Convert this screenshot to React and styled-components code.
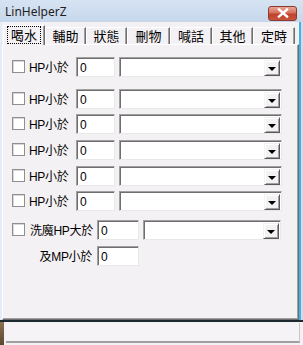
import React from "react";
import styled, { createGlobalStyle } from "styled-components";

const Global = createGlobalStyle`
  html, body {
    margin: 0;
    padding: 0;
    background: #6b5a45;
  }
  #root {
    width: 303px;
    height: 345px;
    overflow: hidden;
  }
`;

const FONT = `"Liberation Sans", "Noto Sans CJK TC", sans-serif`;

const Window = styled.div`
  width: 303px;
  height: 345px;
  display: flex;
  flex-direction: column;
  background: #cddcee;
  font-family: ${FONT};
  color: #000;
`;

const TitleBar = styled.div`
  height: 22px;
  display: flex;
  align-items: center;
  justify-content: space-between;
  padding: 0 6px 0 5px;
  background: linear-gradient(#d6e3f2, #c6d7ec);
  box-sizing: border-box;
`;

const TitleText = styled.div`
  font-family: "Noto Sans", "Liberation Sans", sans-serif;
  font-size: 12px;
  line-height: 14px;
  margin-top: 1px;
  color: #1e1e1e;
`;

const CloseButton = styled.div`
  width: 29px;
  height: 15px;
  margin-top: 4px;
  box-sizing: border-box;
  border: 1px solid #8a3a2e;
  border-radius: 3px;
  background: linear-gradient(#e8a896 0%, #d4705c 45%, #c0402c 55%, #c8553e 100%);
  display: flex;
  align-items: center;
  justify-content: center;
`;

const Client = styled.div`
  flex: 1;
  display: flex;
  flex-direction: column;
  margin: 0 2px 0 2px;
  background: #f4f1f4;
  border-right: 2px solid #3cb4e4;
  box-shadow: -2px 0 0 #e4edf7;
`;

const TabStrip = styled.div`
  height: 22px;
  display: flex;
  align-items: flex-end;
  padding-left: 1px;
`;

const Tab = styled.div`
  box-sizing: border-box;
  width: ${(p) => p.$w}px;
  height: ${(p) => (p.$active ? 20 : 17)}px;
  margin-bottom: ${(p) => (p.$active ? -1 : 0)}px;
  position: relative;
  z-index: ${(p) => (p.$active ? 2 : 1)};
  background: #f4f1f4;
  border-top: 1px solid #fff;
  border-left: 1px solid #fff;
  border-right: 1px solid #6e6e6e;
  box-shadow: inset -1px 0 0 #a0a0a0;
  font-family: "Noto Sans CJK TC", sans-serif;
  font-size: 13px;
  line-height: 16px;
  display: flex;
  align-items: center;
  justify-content: center;
  padding-bottom: ${(p) => (p.$active ? 2 : 0)}px;
`;

const TabLabel = styled.span`
  padding: 0 3px;
  outline: ${(p) => (p.$focus ? "1px dotted #000" : "none")};
`;

const Panel = styled.div`
  flex: 1;
  box-sizing: border-box;
  border-top: 1px solid #fff;
  border-left: 1px solid #fff;
  border-right: 1px solid #6e6e6e;
  border-bottom: 1px solid #6e6e6e;
  box-shadow: inset -1px -1px 0 #a0a0a0;
  padding: 12px 0 0 9px;
  display: flex;
  flex-direction: column;
`;

const Row = styled.div`
  display: flex;
  align-items: center;
  height: 20px;
  margin-top: ${(p) => p.$gap || 0}px;
`;

const Check = styled.div`
  box-sizing: border-box;
  width: 13px;
  height: 13px;
  margin-top: -2px;
  background: #fff;
  border: 1px solid #8f8f8f;
  box-shadow: inset 1px 1px 0 #d8d8d8;
  flex-shrink: 0;
`;

const Label = styled.div`
  font-family: ${FONT};
  font-size: 12px;
  width: ${(p) => p.$w}px;
  margin-left: ${(p) => p.$ml || 0}px;
  text-align: ${(p) => p.$align || "left"};
  padding-right: ${(p) => p.$pr || 0}px;
  box-sizing: border-box;
  flex-shrink: 0;
  white-space: nowrap;
  letter-spacing: -0.3px;
  margin-top: -2px;
`;

const Field = styled.div`
  box-sizing: border-box;
  width: ${(p) => p.$w}px;
  height: 20px;
  flex-shrink: 0;
  background: #fff;
  border-top: 1px solid #a0a0a0;
  border-left: 1px solid #a0a0a0;
  border-right: 1px solid #e8e8e8;
  border-bottom: 1px solid #e8e8e8;
  box-shadow: inset 1px 1px 0 #6e6e6e;
  font-size: 12px;
  line-height: 18px;
  padding: 1px 0 0 3px;
`;

const Combo = styled.div`
  box-sizing: border-box;
  width: ${(p) => p.$w}px;
  height: 20px;
  margin-left: 4px;
  flex-shrink: 0;
  background: #fff;
  border-top: 1px solid #a0a0a0;
  border-left: 1px solid #a0a0a0;
  border-right: 1px solid #e8e8e8;
  border-bottom: 1px solid #e8e8e8;
  box-shadow: inset 1px 1px 0 #6e6e6e;
  display: flex;
  justify-content: flex-end;
  padding: 2px 1px 1px 0;
`;

const DropButton = styled.div`
  box-sizing: border-box;
  width: 16px;
  height: 16px;
  background: #f4f1f4;
  border-top: 1px solid #f4f1f4;
  border-left: 1px solid #f4f1f4;
  border-right: 1px solid #5a5a5a;
  border-bottom: 1px solid #5a5a5a;
  box-shadow: inset 1px 1px 0 #fff, inset -1px -1px 0 #a0a0a0;
  display: flex;
  align-items: center;
  justify-content: center;
`;

const Arrow = styled.div`
  width: 0;
  height: 0;
  border-left: 4px solid transparent;
  border-right: 4px solid transparent;
  border-top: 4px solid #000;
  margin-top: 1px;
`;

const StatusArea = styled.div`
  height: 25px;
  display: flex;
  background: #f4f1f4;
  border-top: 2px solid #1c2a30;
  box-sizing: border-box;
`;

const Wallpaper = styled.div`
  width: 4px;
  background: linear-gradient(#8a7050, #5a4630);
`;

const StatusField = styled.div`
  flex: 1;
  margin: 1px 3px 2px 2px;
  border-bottom: 2px solid #a0a0a0;
  border-right: 1px solid #c8c8c8;
  background: #f6f3f6;
`;

const tabs = [
  ["喝水", 42],
  ["輔助", 41],
  ["狀態", 41],
  ["刪物", 43],
  ["喊話", 42],
  ["其他", 41],
  ["定時", 42],
];

const hpGaps = [0, 12, 5, 6, 6, 5];

function Dropdown({ w }) {
  return (
    <Combo $w={w}>
      <DropButton>
        <Arrow />
      </DropButton>
    </Combo>
  );
}

export default function App() {
  return (
    <>
      <Global />
      <Window>
        <TitleBar>
          <TitleText>LinHelperZ</TitleText>
          <CloseButton>
            <svg width="12" height="10" viewBox="0 0 12 10">
              <path d="M2 1.5 L10 8.5 M10 1.5 L2 8.5" stroke="#fff" strokeWidth="2.4" strokeLinecap="square" />
            </svg>
          </CloseButton>
        </TitleBar>
        <Client>
          <TabStrip>
            {tabs.map(([t, w], i) => (
              <Tab key={t} $w={w} $active={i === 0}>
                <TabLabel $focus={i === 0}>{t}</TabLabel>
              </Tab>
            ))}
          </TabStrip>
          <Panel>
            {hpGaps.map((g, i) => (
              <Row key={i} $gap={g}>
                <Check />
                <Label $w={47} $ml={4}>HP小於</Label>
                <Field $w={39}>0</Field>
                <Dropdown w={163} />
              </Row>
            ))}
            <Row $gap={9}>
              <Check />
              <Label $w={67} $ml={5}>洗魔HP大於</Label>
              <Field $w={42}>0</Field>
              <Dropdown w={138} />
            </Row>
            <Row $gap={6}>
              <Label $w={85} $align="right" $pr={5}>及MP小於</Label>
              <Field $w={42}>0</Field>
            </Row>
          </Panel>
        </Client>
        <StatusArea>
          <Wallpaper />
          <StatusField />
        </StatusArea>
      </Window>
    </>
  );
}
